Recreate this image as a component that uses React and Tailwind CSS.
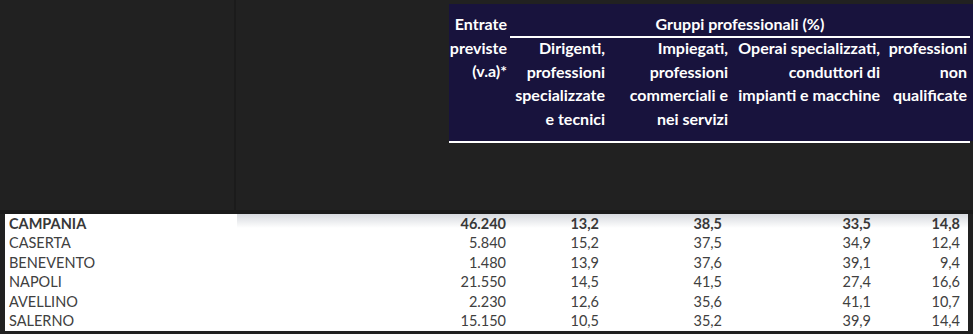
const groups = [
  ["Dirigenti,", "professioni", "specializzate", "e tecnici"],
  ["Impiegati,", "professioni", "commerciali e", "nei servizi"],
  ["Operai specializzati,", "conduttori di", "impianti e macchine"],
  ["professioni", "non", "qualificate"],
];

const rows = [
  { name: "CAMPANIA", total: "46.240", values: ["13,2", "38,5", "33,5", "14,8"], bold: true },
  { name: "CASERTA", total: "5.840", values: ["15,2", "37,5", "34,9", "12,4"] },
  { name: "BENEVENTO", total: "1.480", values: ["13,9", "37,6", "39,1", "9,4"] },
  { name: "NAPOLI", total: "21.550", values: ["14,5", "41,5", "27,4", "16,6"] },
  { name: "AVELLINO", total: "2.230", values: ["12,6", "35,6", "41,1", "10,7"] },
  { name: "SALERNO", total: "15.150", values: ["10,5", "35,2", "39,9", "14,4"] },
];

const font = { fontFamily: "Lato, 'Open Sans', sans-serif" };

export default function App() {
  return (
    <div className="w-[973px] h-[334px] bg-[#212121] flex flex-col overflow-hidden" style={font}>
      {/* top area */}
      <div className="flex h-[210px]">
        <div className="w-[236px] border-r-2 border-[#1b1b1b]" />
        <div className="flex-1 flex justify-end">
          <div className="w-[524px] mt-[4px] flex flex-col">
            <div className="bg-[#18133d] h-[137px] text-white font-bold text-[16px] grid grid-cols-[61px_98px_123px_152px_87px] content-start">
              <div className="row-span-2 text-right pr-[3px] pt-[8px] leading-[23.7px]">
                <div>Entrate</div>
                <div>previste</div>
                <div>(v.a)*</div>
              </div>
              <div className="col-span-4 text-center pt-[8px] leading-[23.7px] h-[34px] border-b-2 border-white">
                Gruppi professionali (%)
              </div>
              {groups.map((lines, i) => (
                <div key={i} className="text-right pr-[3px] leading-[23.7px] -mt-[2px]">
                  {lines.map((l) => (
                    <div key={l} className="whitespace-nowrap">{l}</div>
                  ))}
                </div>
              ))}
            </div>
            <div className="h-[2px] w-[521px] bg-white" />
          </div>
        </div>
      </div>
      <div className="h-[4px] bg-[#1a1a1a]" />

      {/* data table */}
      <div className="relative mx-[5px] w-[963px] bg-white text-[#404040] text-[14.5px]">
        <div className="absolute left-[232px] right-0 top-0 h-[14px] bg-gradient-to-b from-[#d6d9de] to-transparent pointer-events-none" />
        {rows.map((r) => (
          <div
            key={r.name}
            className={`relative grid grid-cols-[435px_66px_93px_123px_149px_89px] h-[19.5px] items-center leading-none ${r.bold ? "font-bold text-[#383838]" : ""}`}
          >
            <div className="pl-[4px]">{r.name}</div>
            <div className="text-right">{r.total}</div>
            {r.values.map((v, i) => (
              <div key={i} className="text-right">{v}</div>
            ))}
          </div>
        ))}
      </div>
    </div>
  );
}
